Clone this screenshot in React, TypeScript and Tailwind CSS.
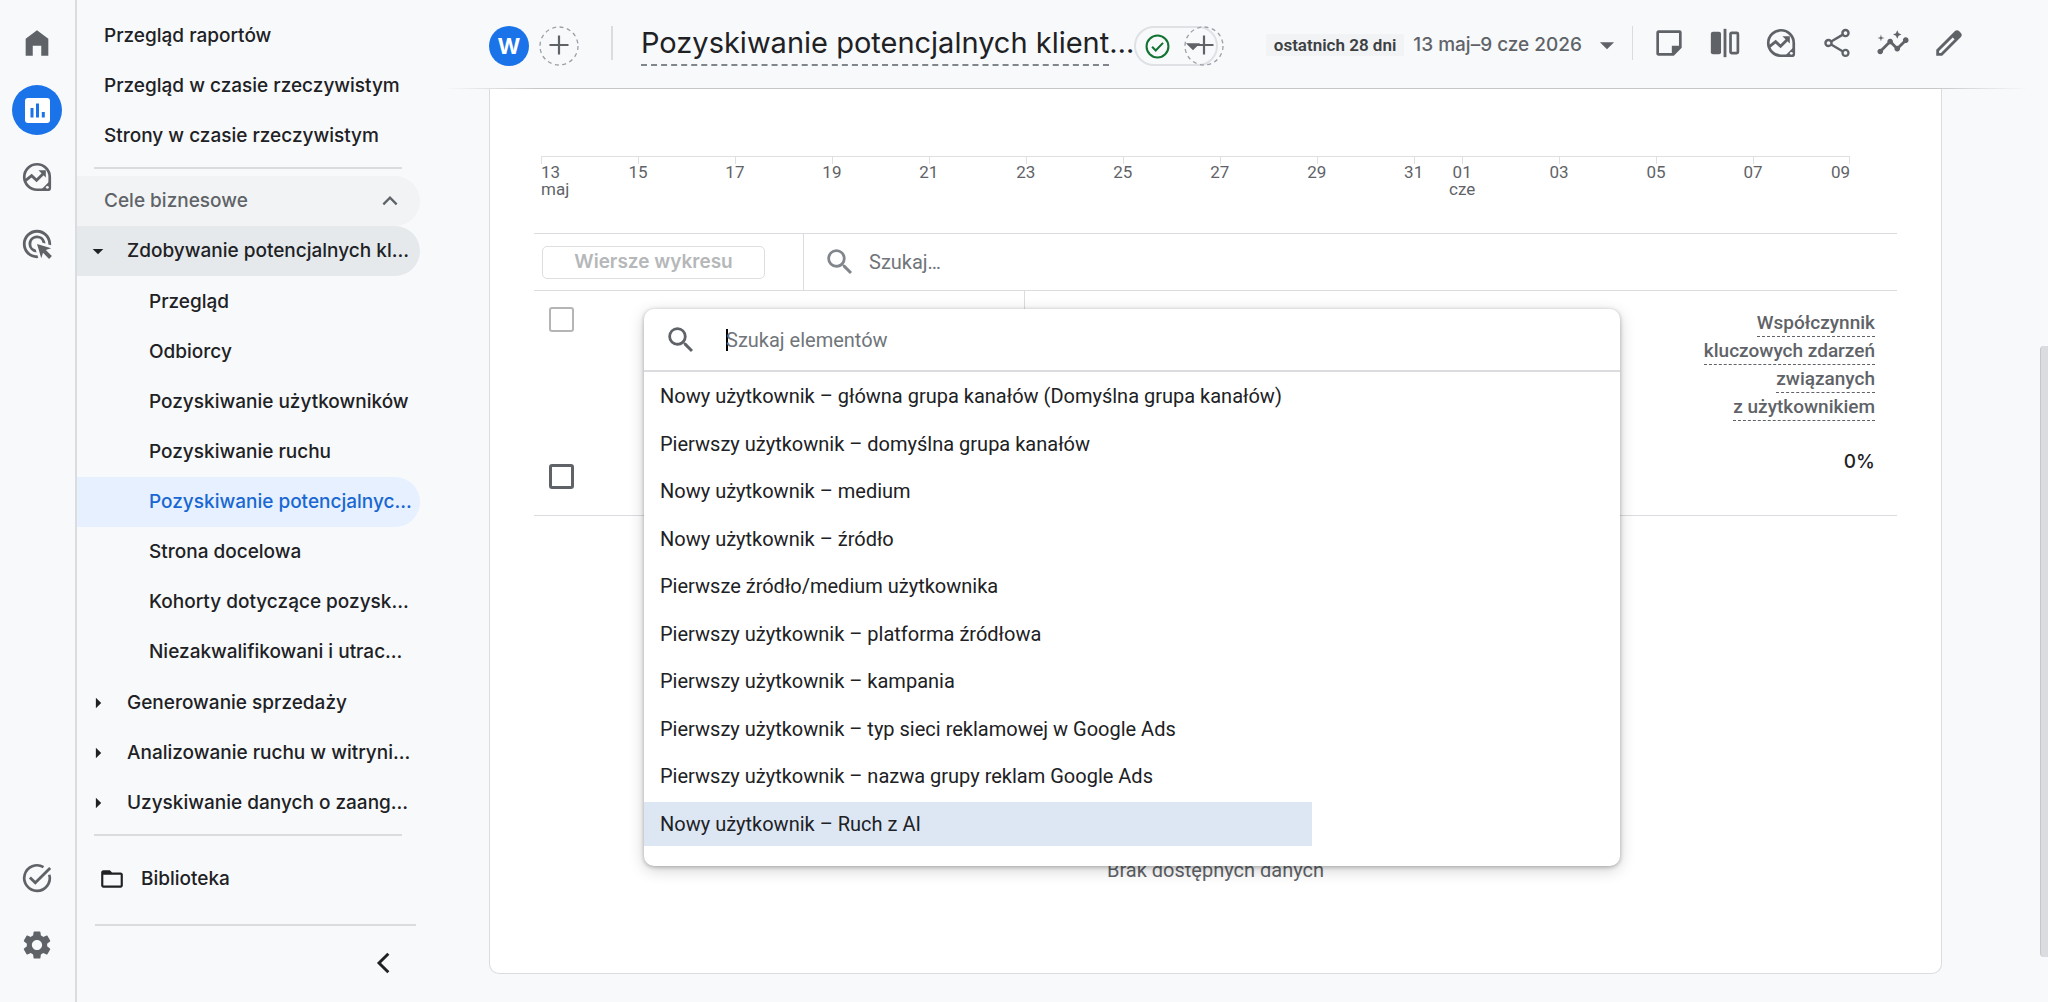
import type { ReactNode } from "react";

type PathProps = { d: string; className?: string };

function Glyph({ d, className = "size-[34px]" }: PathProps) {
  return (
    <svg viewBox="0 0 24 24" className={className} fill="currentColor" aria-hidden="true">
      <path d={d} />
    </svg>
  );
}

const SEARCH =
  "M15.5 14h-.79l-.28-.27A6.471 6.471 0 0 0 16 9.5 6.5 6.5 0 1 0 9.5 16c1.61 0 3.09-.59 4.23-1.57l.27.28v.79l5 4.99L20.49 19l-4.99-5zm-6 0C7.01 14 5 11.99 5 9.5S7.01 5 9.5 5 14 7.01 14 9.5 11.99 14 9.5 14z";
const GEAR =
  "M19.14 12.94c.04-.3.06-.61.06-.94 0-.32-.02-.64-.07-.94l2.03-1.58c.18-.14.23-.41.12-.61l-1.92-3.32c-.12-.22-.37-.29-.59-.22l-2.39.96c-.5-.38-1.03-.7-1.62-.94l-.36-2.54c-.04-.24-.24-.41-.48-.41h-3.84c-.24 0-.43.17-.47.41l-.36 2.54c-.59.24-1.13.57-1.62.94l-2.39-.96c-.22-.08-.47 0-.59.22L2.74 8.87c-.12.21-.08.47.12.61l2.03 1.58c-.05.3-.09.63-.09.94s.02.64.07.94l-2.03 1.58c-.18.14-.23.41-.12.61l1.92 3.32c.12.22.37.29.59.22l2.39-.96c.5.38 1.03.7 1.62.94l.36 2.54c.05.24.24.41.48.41h3.84c.24 0 .44-.17.47-.41l.36-2.54c.59-.24 1.13-.56 1.62-.94l2.39.96c.22.08.47 0 .59-.22l1.92-3.32c.12-.22.07-.47-.12-.61l-2.01-1.58zM12 15.6c-1.98 0-3.6-1.62-3.6-3.6s1.62-3.6 3.6-3.6 3.6 1.62 3.6 3.6-1.62 3.6-3.6 3.6z";
const AD_CLICK =
  "M11.71 17.99A5.993 5.993 0 0 1 6 12c0-3.31 2.69-6 6-6 3.22 0 5.84 2.53 5.99 5.71l-2.1-.63a3.999 3.999 0 1 0-4.81 4.81l.63 2.1zM22 12c0 .3-.01.6-.04.9l-1.97-.59c.01-.1.01-.21.01-.31 0-4.42-3.58-8-8-8s-8 3.58-8 8 3.58 8 8 8c.1 0 .21 0 .31-.01l.59 1.97c-.3.03-.6.04-.9.04-5.52 0-10-4.48-10-10S6.48 2 12 2s10 4.48 10 10zm-3.77 4.26L22 15l-10-3 3 10 1.26-3.77 4.27 4.27 1.98-1.98-4.28-4.26z";
const SHARE =
  "M18 16.1c-.76 0-1.44.3-1.96.77L8.91 12.7c.05-.23.09-.46.09-.7s-.04-.47-.09-.7l7.05-4.11c.54.5 1.25.81 2.04.81 1.66 0 3-1.34 3-3s-1.34-3-3-3-3 1.34-3 3c0 .24.04.47.09.7L8.04 9.81C7.5 9.31 6.79 9 6 9c-1.66 0-3 1.34-3 3s1.34 3 3 3c.79 0 1.5-.31 2.04-.81l7.12 4.16c-.05.21-.08.43-.08.65 0 1.61 1.31 2.92 2.92 2.92s2.92-1.31 2.92-2.92-1.31-2.9-2.92-2.9zM18 3.7a1.3 1.3 0 1 1 0 2.6 1.3 1.3 0 0 1 0-2.6zM6 13.3a1.3 1.3 0 1 1 0-2.6 1.3 1.3 0 0 1 0 2.6zm12 7a1.3 1.3 0 1 1 0-2.6 1.3 1.3 0 0 1 0 2.6z";
const INSIGHTS =
  "M21 8c-1.45 0-2.26 1.44-1.93 2.51l-3.55 3.56c-.3-.09-.74-.09-1.04 0l-2.55-2.55C12.27 10.45 11.46 9 10 9c-1.45 0-2.27 1.44-1.93 2.52l-4.56 4.55C2.44 15.74 1 16.55 1 18c0 1.1.9 2 2 2 1.45 0 2.26-1.44 1.93-2.51l4.55-4.56c.3.09.74.09 1.04 0l2.55 2.55C12.73 16.55 13.54 18 15 18c1.45 0 2.27-1.44 1.93-2.52l3.56-3.55c1.07.33 2.51-.48 2.51-1.93 0-1.1-.9-2-2-2zM15 9l.94-2.07L18 6l-2.06-.93L15 3l-.92 2.07L12 6l2.08.93zM3.5 11l.5-2 2-.5L4 8l-.5-2L3 8l-2 .5L3 9z";
const PENCIL =
  "M20.41 4.94 19.06 3.59c-.78-.78-2.05-.78-2.83 0L3 16.82V21h4.18L20.41 7.77c.79-.78.79-2.05 0-2.83zM6.35 19H5v-1.35l9.6-9.6 1.35 1.35L6.35 19z";
const FOLDER =
  "M20 6h-8l-2-2H4c-1.1 0-1.99.9-1.99 2L2 18c0 1.1.9 2 2 2h16c1.1 0 2-.9 2-2V8c0-1.1-.9-2-2-2zm0 12H4V8h16v10z";
const HOME = "M12 3 4 9v12h5v-7h6v7h5V9z";

function ExploreIcon() {
  return (
    <svg viewBox="0 0 24 24" className="size-[34px]" fill="none" stroke="currentColor" aria-hidden="true">
      <path d="M21 12v7.5a1.5 1.5 0 0 1-1.5 1.5H12a9 9 0 1 1 9-9z" strokeWidth="1.9" />
      <path d="M3.800 14.600l4.400-3.500 3.500 3.200 5-4.900" strokeWidth="2" />
      <path d="M13 7.200h5.200v5.200z" fill="currentColor" stroke="none" />
      <path d="M21.400 14.500v6.900h-6.900z" fill="currentColor" stroke="none" />
      <circle cx="19.300" cy="19.300" r="1" className="fill-[#f8f9fb]" stroke="none" />
    </svg>
  );
}

function TaskIcon() {
  return (
    <svg viewBox="0 0 24 24" className="size-[34px]" fill="none" stroke="currentColor" strokeWidth="2" aria-hidden="true">
      <path d="M16.600 4.300A9 9 0 1 0 20.700 9.700" strokeWidth="1.900" />
      <path d="M7 11.600l3.800 3.800L21.300 4.900" />
    </svg>
  );
}

function ReportsIcon() {
  return (
    <svg viewBox="0 0 25 25" className="size-[25px]" aria-hidden="true">
      <rect width="25" height="25" rx="3" fill="#fff" />
      <path d="M5.500 10h3v9.500h-3zM11 5.500h3v14h-3zM16.800 14h3v5.500h-3z" fill="#1a73e8" />
    </svg>
  );
}

function NoteIcon() {
  return (
    <svg viewBox="0 0 24 24" className="size-[34px]" fill="none" stroke="currentColor" aria-hidden="true">
      <path d="M4.500 4h15a.5.5 0 0 1 .5.5V15l-5 5H4.500a.5.5 0 0 1-.5-.5v-15a.5.5 0 0 1 .5-.5z" strokeWidth="1.900" />
      <path d="M14 14h6.500v1.200l-5.300 5.300H14z" fill="currentColor" stroke="none" />
    </svg>
  );
}

function CompareIcon() {
  return (
    <svg viewBox="0 0 24 24" className="size-[34px]" aria-hidden="true">
      <rect x="2" y="4" width="7.200" height="16" rx="1.500" fill="currentColor" />
      <rect x="11" y="2" width="2" height="20" fill="currentColor" />
      <rect x="15.900" y="4.900" width="5.200" height="14.200" rx="0.800" fill="none" stroke="currentColor" strokeWidth="1.900" />
    </svg>
  );
}

function Caret({ className = "size-[34px]" }: { className?: string }) {
  return <Glyph className={className} d="M7 10l5 5 5-5z" />;
}

function CirclePlus() {
  return (
    <svg viewBox="0 0 40 40" className="size-10" fill="none" stroke="#5f6368" aria-hidden="true">
      <circle cx="20" cy="20" r="19" stroke="#9aa0a6" strokeWidth="1.300" strokeDasharray="4 3.460" />
      <path d="M20 9.500v19M10.500 19h19" strokeWidth="2.200" />
    </svg>
  );
}

function RailLink({ label, active, children }: { label: string; active?: boolean; children: ReactNode }) {
  return (
    <a
      href="#"
      aria-label={label}
      className={`flex size-[50px] items-center justify-center rounded-full ${active ? "bg-[#1a73e8]" : "text-[#5f6368]"}`}
    >
      {children}
    </a>
  );
}

function Rail() {
  return (
    <nav aria-label="Sekcje" className="flex w-[77px] shrink-0 flex-col items-start border-r-2 border-[#dadce0] pt-[18px] pb-8 pl-3">
      <div className="flex flex-col gap-[17px]">
        <RailLink label="Strona główna">
          <Glyph d={HOME} />
        </RailLink>
        <RailLink label="Raporty" active>
          <ReportsIcon />
        </RailLink>
        <RailLink label="Eksploruj">
          <ExploreIcon />
        </RailLink>
        <RailLink label="Reklama">
          <Glyph d={AD_CLICK} />
        </RailLink>
      </div>
      <div className="mt-auto flex flex-col gap-[17px]">
        <RailLink label="Zadania">
          <TaskIcon />
        </RailLink>
        <RailLink label="Administracja">
          <Glyph d={GEAR} />
        </RailLink>
      </div>
    </nav>
  );
}

const topLinks = ["Przegląd raportów", "Przegląd w czasie rzeczywistym", "Strony w czasie rzeczywistym"];
const leadLinks = [
  "Przegląd",
  "Odbiorcy",
  "Pozyskiwanie użytkowników",
  "Pozyskiwanie ruchu",
  "Pozyskiwanie potencjalnyc…",
  "Strona docelowa",
  "Kohorty dotyczące pozysk…",
  "Niezakwalifikowani i utrac…",
];
const otherGroups = ["Generowanie sprzedaży", "Analizowanie ruchu w witryni…", "Uzyskiwanie danych o zaang…"];

function Sidebar() {
  return (
    <nav aria-label="Raporty" className="flex w-[343px] shrink-0 flex-col pt-[11px] text-[19px] font-medium whitespace-nowrap text-[#202124]">
      <ul>
        {topLinks.map((t) => (
          <li key={t}>
            <a href="#" className="flex h-[50px] items-center pl-[27px]">
              {t}
            </a>
          </li>
        ))}
      </ul>
      <hr className="mt-[6px] mr-[18px] mb-[7px] ml-[17px] border-t-2 border-[#dadce0]" />
      <button className="flex h-[50px] items-center justify-between rounded-r-full bg-[#f1f3f4] pr-[14px] pl-[27px] text-[#5f6368]">
        Cele biznesowe
        <svg viewBox="0 0 24 24" className="size-8" fill="none" stroke="currentColor" strokeWidth="1.700" aria-hidden="true">
          <path d="M7 14.500l5-5 5 5" />
        </svg>
      </button>
      <button className="flex h-[50px] items-center gap-[12px] rounded-r-full bg-[#e5e9ec] pl-[4px]">
        <Caret className="size-[34px] scale-75" />
        Zdobywanie potencjalnych kl…
      </button>
      <ul className="py-px">
        {leadLinks.map((t, i) => (
          <li key={t}>
            <a
              href="#"
              aria-current={i === 4 ? "page" : undefined}
              className={`flex h-[50px] items-center rounded-r-full pl-[72px] ${i === 4 ? "bg-[#e6f0fe] text-[#1967d2]" : ""}`}
            >
              {t}
            </a>
          </li>
        ))}
      </ul>
      {otherGroups.map((t) => (
        <button key={t} className="flex h-[50px] items-center gap-[12px] pl-[4px]">
          <Caret className="size-[34px] scale-75 -rotate-90" />
          {t}
        </button>
      ))}
      <hr className="mt-[6px] mr-[18px] mb-[18px] ml-[17px] border-t-2 border-[#dadce0]" />
      <a href="#" className="flex h-[50px] items-center gap-[16px] pl-[22px]">
        <Glyph d={FOLDER} className="size-[26px]" />
        Biblioteka
      </a>
      <hr className="mt-5 mr-1 ml-[18px] border-t-2 border-[#dadce0]" />
      <button aria-label="Zwiń menu" className="mt-[20px] mr-[20px] flex size-[34px] items-center justify-center self-end">
        <svg viewBox="0 0 24 24" className="size-8" fill="none" stroke="currentColor" strokeWidth="2.200" aria-hidden="true">
          <path d="M16 5l-7 7 7 7" />
        </svg>
      </button>
    </nav>
  );
}

function Header() {
  const tools: [string, ReactNode][] = [
    ["Adnotacje", <NoteIcon />],
    ["Porównaj", <CompareIcon />],
    ["Eksploruj", <ExploreIcon />],
    ["Udostępnij", <Glyph d={SHARE} />],
    ["Statystyki", <Glyph d={INSIGHTS} />],
    ["Edytuj", <Glyph d={PENCIL} />],
  ];
  return (
    <header>
      <div className="flex h-[88px] items-start pt-[26px] pr-[82px] pl-[69px]">
        <span className="flex size-10 shrink-0 items-center justify-center rounded-full bg-[#1a73e8] text-[22px] font-bold text-white">W</span>
        <button aria-label="Dodaj porównanie" className="ml-[10px] shrink-0">
          <CirclePlus />
        </button>
        <div className="mr-7 ml-8 h-[34px] w-[2px] shrink-0 bg-[#dadce0]" />
        <h1 className="flex shrink-0 items-start text-[29px] leading-[34px] text-[#202124]">
          <span className="h-10 border-b-2 border-dashed border-[#80868b]">Pozyskiwanie potencjalnych klient</span>
          <span>…</span>
        </h1>
        <div className="relative flex h-10 w-[84px] shrink-0 items-center rounded-full border-2 border-[#dfe1e5] pl-[9px]">
          <button aria-label="Stan danych" className="flex items-center gap-[6px] text-[#5f6368]">
            <svg viewBox="0 0 24 24" className="size-[25px]" fill="none" stroke="#137333" strokeWidth="2" aria-hidden="true">
              <circle cx="12" cy="12" r="10.500" />
              <path d="M6.800 12.300l3.500 3.500 7-7.300" />
            </svg>
            <Caret className="size-[34px]" />
          </button>
          <button aria-label="Dodaj" className="absolute -top-[2px] left-[48px]">
            <CirclePlus />
          </button>
        </div>
        <button className="ml-auto flex h-[38px] shrink-0 items-center text-[#5f6368]">
          <span className="bg-[#f1f3f4] px-[8px] font-[Roboto,sans-serif] text-[17px] leading-[22px] font-semibold text-[#3c4043]">ostatnich 28 dni</span>
          <span className="ml-[9px] text-[19px] font-medium">13 maj–9 cze 2026</span>
          <Caret className="ml-2 size-[34px]" />
        </button>
        <div className="mr-[19px] ml-[8px] h-[34px] w-px shrink-0 bg-[#dadce0]" />
        <div className="flex gap-[22px] text-[#5f6368]">
          {tools.map(([label, icon]) => (
            <button key={label} aria-label={label}>
              {icon}
            </button>
          ))}
        </div>
      </div>
      <div className="mr-5 ml-6 h-px bg-linear-to-r from-transparent from-0% via-[#c4c7c5] via-6% to-[#c4c7c5] to-94% mask-r-from-94% mask-r-to-100%" />
    </header>
  );
}

const ticks: { day: number; label: string; month?: string }[] = [
  { day: 0, label: "13", month: "maj" },
  { day: 2, label: "15" },
  { day: 4, label: "17" },
  { day: 6, label: "19" },
  { day: 8, label: "21" },
  { day: 10, label: "23" },
  { day: 12, label: "25" },
  { day: 14, label: "27" },
  { day: 16, label: "29" },
  { day: 18, label: "31" },
  { day: 19, label: "01", month: "cze" },
  { day: 21, label: "03" },
  { day: 23, label: "05" },
  { day: 25, label: "07" },
  { day: 27, label: "09" },
];

function Axis() {
  return (
    <div className="mr-[47px] ml-[7px] grid h-[77px] grid-cols-[repeat(27,minmax(0,1fr))] grid-rows-[7px_1fr] border-t border-[#e0e0e0] text-[17px] leading-[17px] text-[#5f6368]">
      {ticks.map(({ day }) => (
        <span
          key={day}
          className={`row-start-1 border-[#e0e0e0] ${day === 27 ? "border-r" : "border-l"}`}
          style={{ gridColumn: day === 27 ? 27 : day + 1 }}
        />
      ))}
      {ticks.map(({ day, label, month }) => (
        <span
          key={day}
          className={`row-start-2 flex flex-col ${day === 0 ? "items-start" : day === 27 ? "items-end" : "items-center"}`}
          style={{ gridColumn: day === 0 ? 1 : day === 27 ? 27 : `${day} / span 2` }}
        >
          <span>{label}</span>
          {month && <span>{month}</span>}
        </span>
      ))}
    </div>
  );
}

const dimensions = [
  "Nowy użytkownik – główna grupa kanałów (Domyślna grupa kanałów)",
  "Pierwszy użytkownik – domyślna grupa kanałów",
  "Nowy użytkownik – medium",
  "Nowy użytkownik – źródło",
  "Pierwsze źródło/medium użytkownika",
  "Pierwszy użytkownik – platforma źródłowa",
  "Pierwszy użytkownik – kampania",
  "Pierwszy użytkownik – typ sieci reklamowej w Google Ads",
  "Pierwszy użytkownik – nazwa grupy reklam Google Ads",
  "Nowy użytkownik – Ruch z AI",
];

function DimensionMenu() {
  return (
    <div className="absolute top-[220px] right-[321px] left-[154px] rounded-[10px] bg-white pb-5 shadow-[0_4px_16px_rgba(0,0,0,0.18),0_1px_4px_rgba(0,0,0,0.28)]">
      <label className="flex h-[63px] items-center border-b-2 border-[#dadce0] pl-[20px] text-[#5f6368]">
        <Glyph d={SEARCH} />
        <span className="ml-[28px] h-[22px] w-[2px] bg-black" />
        <input
          type="text"
          aria-label="Szukaj elementów"
          placeholder="Szukaj elementów"
          className="-ml-0.5 flex-1 text-[20px] outline-none placeholder:text-[#70757a]"
        />
      </label>
      <ul className="mt-[2px] grid h-[472px] auto-rows-fr gap-[3px] text-[20px] text-[#202124]">
        {dimensions.map((d, i) => (
          <li key={d} className="flex">
            <button className={`pl-4 text-left ${i === 9 ? "w-[668px] bg-[#dde7f4]" : "w-full"}`}>{d}</button>
          </li>
        ))}
      </ul>
    </div>
  );
}

function ReportCard() {
  const metric = ["Współczynnik", "kluczowych zdarzeń", "związanych", "z użytkownikiem"];
  return (
    <section className="relative mr-[106px] mb-[28px] ml-[69px] flex flex-1 flex-col rounded-b-[10px] border border-t-0 border-[#dadce0] bg-white pt-[67px] pr-11 pl-11 font-[Roboto,sans-serif]">
      <Axis />
      <div className="flex h-[58px] items-stretch border-y border-[#dadce0]">
        <div className="flex w-[270px] items-center border-r border-[#dadce0] pl-2">
          <button disabled className="h-[33px] w-[223px] rounded-[5px] border border-[#dedede] font-[Inter,sans-serif] text-[19px] font-semibold text-[#b5b7b9]">
            Wiersze wykresu
          </button>
        </div>
        <label className="flex flex-1 items-center pl-[19px] text-[#80868b]">
          <Glyph d={SEARCH} />
          <input type="text" aria-label="Szukaj" placeholder="Szukaj…" className="ml-[12px] flex-1 text-[20px] outline-none placeholder:text-[#70757a]" />
        </label>
      </div>
      <table className="w-full table-fixed border-collapse">
        <colgroup>
          <col className="w-[110px]" />
          <col className="w-[380px]" />
          <col />
        </colgroup>
        <thead>
          <tr className="h-[147px]">
            <th className="pt-4 pl-[15px] text-left align-top">
              <input type="checkbox" disabled aria-label="Zaznacz wszystkie" className="block size-[25px] appearance-none rounded-[3px] border-2 border-[#b3b5b7]" />
            </th>
            <th className="border-r border-[#dadce0]" />
            <th className="pt-[18px] pr-[22px] text-right align-top text-[19px] leading-[28px] font-medium text-[#5f6368]">
              {metric.map((m) => (
                <div key={m} className="h-7">
                  <span className="inline-block h-7 border-b border-dashed border-[#5f6368]">{m}</span>
                </div>
              ))}
            </th>
          </tr>
        </thead>
        <tbody>
          <tr className="h-[77px] border-b border-[#dadce0]">
            <td className="pl-[15px]">
              <input type="checkbox" aria-label="Suma" className="block size-[25px] appearance-none rounded-[3px] border-[3px] border-[#5f6368]" />
            </td>
            <td className="border-r border-[#dadce0]" />
            <td className="pt-[10px] pr-[22px] text-right align-top font-[Inter,sans-serif] text-[19px] font-medium text-[#202124]">0%</td>
          </tr>
        </tbody>
      </table>
      <p className="mt-auto pb-[89px] text-center text-[20px] leading-7 text-[#5f6368]">Brak dostępnych danych</p>
      <DimensionMenu />
    </section>
  );
}

export default function App() {
  return (
    <div className="relative flex h-screen overflow-hidden bg-[#f8f9fb] font-[Inter,sans-serif]">
      <Rail />
      <Sidebar />
      <main className="flex min-w-0 flex-1 flex-col">
        <Header />
        <ReportCard />
      </main>
      <div className="absolute top-[346px] right-0 h-[611px] w-2 rounded-l-[4px] border-l border-[#c4c8cb] bg-[#dadce0]" />
    </div>
  );
}
